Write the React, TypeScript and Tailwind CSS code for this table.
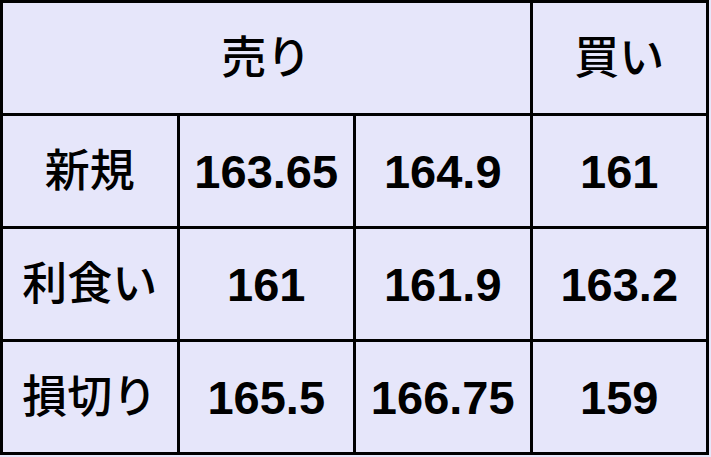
import React from 'react';

const rows: { label: string; cells: string[] }[] = [
  { label: '新規', cells: ['163.65', '164.9', '161'] },
  { label: '利食い', cells: ['161', '161.9', '163.2'] },
  { label: '損切り', cells: ['165.5', '166.75', '159'] },
];

const cell =
  'flex items-center justify-center border-r-[3px] border-b-[3px] border-black';

// japanese labels render a bit lighter than the numbers
const jp = 'text-[45px] font-medium';

const App: React.FC = () => {
  return (
    <div className="w-[711px] h-[457px] bg-[#e6e6fa]">
      <div
        className="w-[709px] h-[455px] grid grid-cols-4 grid-rows-4 border-l-[3px] border-t-[3px] border-black text-black text-[47px] font-bold leading-none"
        style={{ fontFamily: '"Liberation Sans", "Noto Sans CJK JP", sans-serif' }}
      >
        {/* header */}
        <div className={`${cell} ${jp} col-span-3`}>売り</div>
        <div className={`${cell} ${jp}`}>買い</div>

        {rows.map((row) => (
          <React.Fragment key={row.label}>
            <div className={`${cell} ${jp}`}>{row.label}</div>
            {row.cells.map((v, i) => (
              <div key={i} className={cell}>
                {v}
              </div>
            ))}
          </React.Fragment>
        ))}
      </div>
    </div>
  );
};

export default App;
